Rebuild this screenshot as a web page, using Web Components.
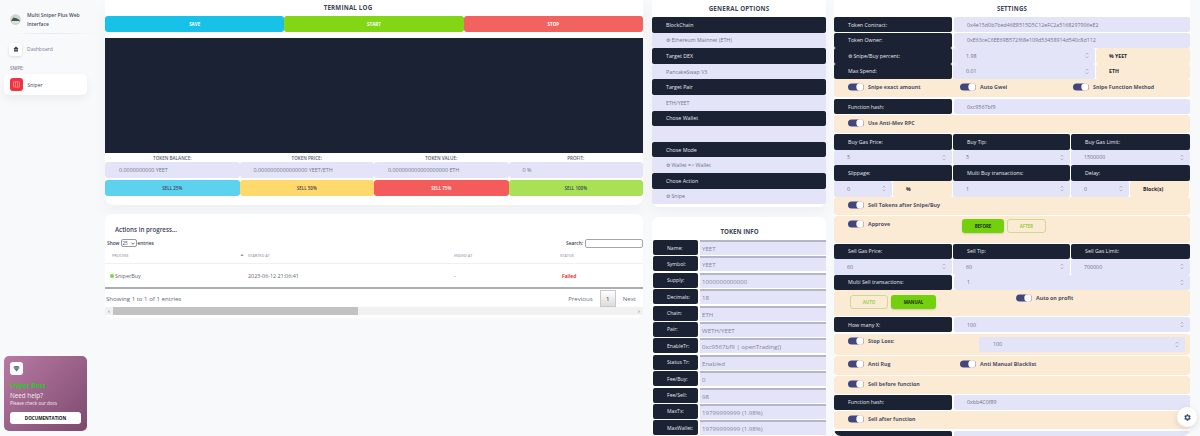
<!DOCTYPE html>
<html><head><meta charset="utf-8">
<style>
html,body{margin:0;padding:0;height:436px;overflow:hidden;background:#f8f9fa;font-family:"Open Sans","Liberation Sans",sans-serif;color:#67748e}
app-shell{display:flex;align-items:flex-start;width:1200px;height:436px;overflow:hidden}
</style></head><body>
<app-shell>
  <side-bar></side-bar>
  <div style="width:538px;flex:none;margin-left:0">
    <terminal-card></terminal-card>
    <actions-card></actions-card>
  </div>
  <div style="width:174px;flex:none;margin-left:9px">
    <general-card></general-card>
    <token-card></token-card>
  </div>
  <settings-card></settings-card>
</app-shell>
<gear-fab></gear-fab>
<script>
const def=(name,css,html)=>customElements.define(name,class extends HTMLElement{
  connectedCallback(){ if(this.shadowRoot) return;
    const r=this.attachShadow({mode:'open'});
    r.innerHTML='<style>'+css+'</style>'+(typeof html==='function'?html(this):html);
  }
});
const spin='<svg width="4" height="7" viewBox="0 0 4 7"><path d="M.7 2.5 2 1l1.3 1.5M.7 4.5 2 6l1.3-1.5" fill="none" stroke="#9a9cae" stroke-width=".6"/></svg>';
const toggle='<svg width="16" height="8" viewBox="0 0 16 8" style="flex:none;display:block"><rect width="16" height="7" y=".5" rx="3.5" fill="#41467e"/><circle cx="12" cy="4" r="3.7" fill="#fff"/></svg>';

/* ---------- small parts ---------- */
def('dark-cell',`:host{display:flex;align-items:center;box-sizing:border-box;background:#1a2233;color:#e6e8ee;font-size:5.3px;border-radius:2px;padding-left:var(--pl,14px);height:100%;white-space:nowrap}`,'<slot></slot>');
def('light-cell',`:host{display:flex;align-items:center;justify-content:space-between;box-sizing:border-box;background:#e4e4f8;color:#70748a;font-size:5.3px;border-radius:2px;padding:0 6px 0 var(--pl,13px);height:100%;white-space:nowrap}
 svg{display:block}`,t=>'<span><slot></slot></span>'+(t.hasAttribute('spin')?spin:''));
def('peach-cell',`:host{display:flex;align-items:center;box-sizing:border-box;background:#fbebd5;color:#1d2333;font-weight:700;font-size:5.2px;border-radius:2px;height:100%;padding-left:13px;white-space:nowrap}`,'<slot></slot>');
def('tog-gle',`:host{display:flex;align-items:center;gap:4px;color:#4b5168;font-size:5.3px;font-weight:700;white-space:nowrap}`,t=>toggle+'<span><slot></slot></span>');
def('opt-row',`:host{display:flex;box-sizing:border-box;background:#fbebd5;border-radius:3px;padding:0 0 2px 14px;margin-bottom:1px;position:relative}`,'<slot></slot>');
def('pill-btn',`:host{display:flex;align-items:center;justify-content:center;box-sizing:border-box;border-radius:3px;font-size:4.4px;font-weight:700;height:100%;white-space:nowrap}
 :host([kind=fill]){background:#73d00c;color:#1c2a10;box-shadow:0 1px 2px #0002}
 :host([kind=line]){border:1px solid #c9dd8c;color:#9ccb3a;background:transparent}`,'<slot></slot>');

/* ---------- sidebar ---------- */
def('side-bar',`:host{display:flex;flex-direction:column;box-sizing:border-box;flex:none;width:105px;height:436px;padding-top:10px}
 .brand{display:flex;align-items:center;gap:6px;padding:0 22px 0 10px;height:19px;color:#485068;font-size:5px;font-weight:600;line-height:9px}
 .logo{width:11px;height:11px;flex:none;border-radius:50%;display:block}
 .rule{height:1px;margin:4px 8px 0;background:linear-gradient(90deg,#0000,#e6e8ee,#0000)}
 .item{display:flex;align-items:center;gap:5px;margin:8px 0 0 9px;height:14px;font-size:5px;color:#7b809a}
 .tile{display:flex;align-items:center;justify-content:center;flex:none;width:13px;height:13px;border-radius:3px;background:#fff;box-shadow:0 1px 3px #0000001f}
 .head{font-size:4.4px;font-weight:600;color:#7b7f92;margin:9px 0 0 10px;line-height:6px}
 .active{display:flex;align-items:center;gap:5px;width:83px;height:21px;box-sizing:border-box;padding-left:6px;margin:3px 0 0 4px;background:#fff;border-radius:5px;box-shadow:0 4px 10px #0000000f;font-size:5px;color:#3d4459}
 .red{display:flex;align-items:center;justify-content:center;width:12.5px;height:12.5px;border-radius:3px;background:#ef3340}
 .help{box-sizing:border-box;width:83px;height:75px;margin:auto 0 5px 4px;padding:6px;border-radius:5px;background:linear-gradient(135deg,#b87aa4,#7d4a6e);color:#fff}
 .tile2{display:flex;align-items:center;justify-content:center;width:12.5px;height:12.5px;border-radius:3px;background:#fff}
 .g{color:#2ac928;font-weight:700;font-size:6.2px;line-height:8px;margin-top:7px}
 .n{font-size:6.3px;line-height:8px;margin-top:2px;color:#f6edf3}
 .p{font-size:4.6px;line-height:6px;margin-top:.4px;color:#f6edf3}
 .doc{display:flex;align-items:center;justify-content:center;height:12.5px;width:71px;margin-top:6px;background:#fff;border-radius:3px;color:#111;font-size:4.6px;font-weight:700}`,
 `<div class="brand"><svg class="logo" viewBox="0 0 11 11"><circle cx="5.5" cy="5.5" r="5.5" fill="#cfd6d0"/><path d="M1.5 6l2-2.5 3 .8 3 1.7v1.5h-8z" fill="#3f5a4e"/><rect x="2" y="7.2" width="7" height="1.2" fill="#f4f6f4"/></svg><span>Multi Sniper Plus Web Interface</span></div>
 <div class="rule"></div>
 <div class="item"><span class="tile"><svg width="6" height="6" viewBox="0 0 6 6"><path d="M3 .6 5.6 2.8H5v2.7H1V2.8H.4z" fill="#3a4154"/><rect x="1.2" y="3.6" width="3.6" height=".5" fill="#fff"/></svg></span>Dashboard</div>
 <div class="head">SNIPE:</div>
 <div class="active"><span class="red"><svg width="7" height="7" viewBox="0 0 7 7"><rect x=".6" y=".8" width="5.8" height="5.4" rx=".6" fill="none" stroke="#f9a4aa" stroke-width=".7"/><path d="M2.5 1v5M4.5 1v5" stroke="#f9a4aa" stroke-width=".6"/></svg></span>Sniper</div>
 <div class="help"><div class="tile2"><svg width="7" height="7" viewBox="0 0 7 7"><path d="M1.6 1h3.8L6.6 2.8 3.5 6.4.4 2.8z" fill="#5f7080"/><path d="M.8 3h5.4" stroke="#fff" stroke-width=".4"/></svg></div>
 <div class="g">Sniper Boss</div><div class="n">Need help?</div><div class="p">Please check our docs</div><div class="doc">DOCUMENTATION</div></div>`);

/* ---------- terminal ---------- */
def('terminal-card',`:host{display:block;box-sizing:border-box;background:#fff;height:205px;border-radius:0 0 8px 8px;box-shadow:0 8px 16px #0000000a}
 h3{margin:0;height:16px;padding-right:52px;text-align:center;font-size:6.2px;font-weight:700;line-height:15px;color:#3d4459;letter-spacing:.2px}
 .btns{display:grid;grid-template-columns:repeat(3,1fr);height:16px}
 .btns div,.sell div{display:flex;align-items:center;justify-content:center;font-size:4.5px;font-weight:700;border-radius:3px}
 .btns div{color:#fff}
 .term{height:115px;margin-top:6px;background:#1a2233}
 .lab{display:grid;grid-template-columns:repeat(4,1fr);height:9px;font-size:4.6px;font-weight:600;color:#555b70;text-align:center;line-height:10px}
 .val{display:grid;grid-template-columns:repeat(4,1fr);height:16px}
 .val div{display:flex;align-items:center;padding-left:14px;background:#e4e4f8;border-radius:3px;font-size:5.4px;color:#70748a;white-space:nowrap;overflow:hidden}
 .sell{display:grid;grid-template-columns:repeat(4,1fr);height:16px;margin-top:2px}
 .sell div{font-weight:600;color:#3a4154}`,
 `<h3>TERMINAL LOG</h3>
 <div class="btns"><div style="background:#17c1e8">SAVE</div><div style="background:#82d616">START</div><div style="background:#f2625f">STOP</div></div>
 <div class="term"></div>
 <div class="lab"><span>TOKEN BALANCE:</span><span>TOKEN PRICE:</span><span>TOKEN VALUE:</span><span>PROFIT:</span></div>
 <div class="val"><div>0.0000000000 YEET</div><div>0.0000000000000000 YEET/ETH</div><div>0.000000000000000000 ETH</div><div>0 %</div></div>
 <div class="sell"><div style="background:#5cd2ef">SELL 25%</div><div style="background:#ffd96b">SELL 50%</div><div style="background:#f45c5c;color:#fff">SELL 75%</div><div style="background:#a8e254">SELL 100%</div></div>`);

/* ---------- actions ---------- */
def('actions-card',`:host{display:block;box-sizing:border-box;background:#fff;height:104px;margin-top:9px;border-radius:7px;position:relative;color:#5f6478;font-size:6.1px}
 .t{padding:11px 0 0 10px;font-size:6.2px;font-weight:600;line-height:9px;color:#3d4459}
 .ctl{display:flex;justify-content:space-between;align-items:center;height:10px;margin-top:4px;padding:0 0 0 2px;font-size:4.8px;color:#3a4154;font-weight:600}
 .ctl span{display:flex;align-items:center;gap:1px}
 .sel{display:inline-flex;align-items:center;justify-content:space-around;box-sizing:border-box;width:16px;height:7.5px;border:1px solid #9a9aa5;border-radius:2px;font-size:4.6px;font-weight:400}
 .sr{box-sizing:border-box;display:inline-block;width:58px;height:9px;border:1px solid #a5a5ad;border-radius:2px;margin-left:1px}
 .grid{display:grid;grid-template-columns:138px 140px 123px 1fr}
 .h{height:15px;border-bottom:1px solid #eef0f4;font-size:3.8px;color:#9fa3b4;display:flex;align-items:center;font-weight:600;position:relative}
 .c{height:25px;display:flex;align-items:center;font-size:5.4px;border-bottom:2px solid #a9adb4;box-sizing:border-box}
 .info{display:flex;justify-content:space-between;height:18px;align-items:center;padding-left:1px;font-size:6.1px}
 .pg{display:flex;align-items:center;gap:7px;padding-right:7px;font-size:6.1px;color:#6a6f80}
 .one{display:flex;align-items:center;justify-content:center;width:16px;height:17px;border:1px solid #c9c9c9;background:linear-gradient(#fff,#dcdcdc);color:#333;box-sizing:border-box}
 .bar{display:flex;height:8px;background:#f1f1f1;align-items:center;position:relative}
 .th{position:absolute;left:8px;width:245px;height:8px;background:#c2c2c2}
 .ar{font-size:6px;line-height:8px;color:#505050;width:8px;text-align:center}`,
 `<div class="t">Actions in progress...</div>
 <div class="ctl"><span>Show <span class="sel">25 <svg width="4" height="3" viewBox="0 0 4 3"><path d="M.5.7 2 2.3 3.5.7" fill="none" stroke="#333" stroke-width=".7"/></svg></span> entries</span><span>Search: <span class="sr"></span></span></div>
 <div class="grid">
  <div class="h" style="padding-left:7px">PROCESS<span style="position:absolute;right:-1px;top:4px;font-size:4px;color:#7a7f95">▲</span></div><div class="h" style="padding-left:5px">STARTED AT</div><div class="h" style="padding-left:71px">ENDED AT</div><div class="h" style="padding-left:54px">STATUS</div>
  <div class="c" style="padding-left:5px;color:#5f6478"><svg width="4" height="4" viewBox="0 0 4 4" style="flex:none;margin-right:1px"><circle cx="2" cy="2" r="2" fill="#7ed24a"/></svg>SniperBuy</div>
  <div class="c" style="padding-left:5px">2023-06-12 21:06:41</div>
  <div class="c" style="padding-left:71px">-</div>
  <div class="c" style="padding-left:56px;color:#ea0606;font-weight:600;font-size:5px">Failed</div>
 </div>
 <div class="info"><span>Showing 1 to 1 of 1 entries</span><span class="pg"><span>Previous</span><span class="one">1</span><span>Next</span></span></div>
 <div class="bar"><span class="ar">‹</span><span class="th"></span><span class="ar" style="margin-left:auto">›</span></div>`);

/* ---------- general ---------- */
const gen=[['BlockChain','⚙ Ethereum Mainnet (ETH)'],['Target DEX','PancakeSwap V3'],['Target Pair','ETH/YEET'],['Chose Wallet',''],['Chose Mode','⚙ Wallet => Wallet'],['Chose Action','⚙ Snipe']];
def('general-card',`:host{display:block;box-sizing:border-box;background:#fff;height:207px;border-radius:0 0 7px 7px;box-shadow:0 6px 12px #0000000a;--pl:14px}
 h3{margin:0;height:17px;text-align:center;font-size:6.2px;font-weight:700;line-height:17px;color:#3d4459;letter-spacing:.2px}
 .r{height:15.6px}`,
 '<h3>GENERAL OPTIONS</h3>'+gen.map(g=>`<div class="r"><dark-cell>${g[0]}</dark-cell></div><div class="r"><light-cell>${g[1]}</light-cell></div>`).join(''));

/* ---------- token ---------- */
const tok=[['Name:','YEET'],['Symbol:','YEET'],['Supply:','1000000000000'],['Decimals:','18'],['Chain:','ETH'],['Pair:','WETH/YEET'],['EnableTr:','0xc9567bf9 | openTrading()'],['Status Tr:','Enabled'],['Fee/Buy:','0'],['Fee/Sell:','98'],['MaxTx:','19799999999 (1.98%)'],['MaxWallet:','19799999999 (1.98%)']];
def('token-card',`:host{display:block;box-sizing:border-box;background:#fff;height:219px;margin-top:10px;border-radius:7px;padding:10px 0 0 1px}
 h3{margin:0;height:13px;text-align:center;font-size:6.2px;font-weight:700;line-height:9px;color:#3d4459}
 .r{display:grid;grid-template-columns:45px 1fr;gap:2px;height:15px;margin-bottom:1.4px}
 dark-cell{--pl:14px;font-size:5.1px}
 .v{display:flex;align-items:center;padding-left:2px;background:#e4e4f8;border-top:2px solid #b4b5c9;box-sizing:border-box;font-size:6.1px;color:#80849a;white-space:nowrap}`,
 '<h3>TOKEN INFO</h3>'+tok.map(t=>`<div class="r"><dark-cell>${t[0]}</dark-cell><div class="v">${t[1]}</div></div>`).join(''));

/* ---------- settings ---------- */
def('settings-card',`:host{display:block;box-sizing:border-box;flex:none;width:356px;height:436px;margin-left:8px;background:#fff;border-radius:0 0 7px 7px;overflow:hidden}
 h3{margin:0;height:17px;text-align:center;font-size:6.1px;font-weight:700;line-height:17px;color:#3d4459;letter-spacing:.2px}
 .two{display:grid;grid-template-columns:118px 1fr;gap:2px;height:15px;margin-bottom:.5px}
 .two4{display:grid;grid-template-columns:118px 1fr 94px;gap:2px 1px;height:15.5px}
 .three{display:grid;grid-template-columns:118px 117px 1fr;gap:1px;height:15.5px}
 .six{display:grid;grid-template-columns:58px 59px 117px 58px 59px;gap:1px;height:16px}
 opt-row{align-items:center}
 .bt{display:flex;gap:3px;height:15px;align-items:center}`,
 `<h3>SETTINGS</h3>
 <div class="two"><dark-cell>Token Contract:</dark-cell><light-cell>0x4e15d0b7bed46E8515D5C12eFC2a5168297906eE2</light-cell></div>
 <div class="two"><dark-cell>Token Owner:</dark-cell><light-cell>0xE63ceC6EE69B572f68e109d53458914d540c8d112</light-cell></div>
 <div class="two4"><dark-cell>⚙ Snipe/Buy percent:</dark-cell><light-cell spin>1.98</light-cell><peach-cell>% YEET</peach-cell></div>
 <div class="two4"><dark-cell>Max Spend:</dark-cell><light-cell spin>0.01</light-cell><peach-cell>ETH</peach-cell></div>
 <opt-row style="height:18px;margin-bottom:2px"><tog-gle style="width:112px">Snipe exact amount</tog-gle><tog-gle style="width:113px">Auto Gwei</tog-gle><tog-gle>Snipe Function Method</tog-gle></opt-row>
 <div class="two" style="height:15px;margin-bottom:1px"><dark-cell>Function hash:</dark-cell><light-cell>0xc9567bf9</light-cell></div>
 <opt-row style="height:18px;margin-bottom:1px"><tog-gle>Use Anti-Mev RPC</tog-gle></opt-row>
 <div class="three"><dark-cell>Buy Gas Price:</dark-cell><dark-cell>Buy Tip:</dark-cell><dark-cell>Buy Gas Limit:</dark-cell></div>
 <div class="three"><light-cell spin>5</light-cell><light-cell spin>5</light-cell><light-cell spin>1500000</light-cell></div>
 <div class="three"><dark-cell>Slippage:</dark-cell><dark-cell>Multi Buy transactions:</dark-cell><dark-cell>Delay:</dark-cell></div>
 <div class="six"><light-cell spin>0</light-cell><peach-cell>%</peach-cell><light-cell spin>1</light-cell><light-cell spin>0</light-cell><peach-cell>Block(s)</peach-cell></div>
 <opt-row style="height:18px;margin-bottom:1px"><tog-gle>Sell Tokens after Snipe/Buy</tog-gle></opt-row>
 <opt-row style="height:27px;align-items:flex-start;padding-top:4px"><tog-gle style="width:114px">Approve</tog-gle><div class="bt" style="margin-top:-1px"><pill-btn kind="fill" style="width:42px;height:14px">BEFORE</pill-btn><pill-btn kind="line" style="width:39px;height:14px">AFTER</pill-btn></div></opt-row>
 <div class="three"><dark-cell>Sell Gas Price:</dark-cell><dark-cell>Sell Tip:</dark-cell><dark-cell>Sell Gas Limit:</dark-cell></div>
 <div class="three"><light-cell spin>60</light-cell><light-cell spin>60</light-cell><light-cell spin>700000</light-cell></div>
 <div class="two"><dark-cell>Multi Sell transactions:</dark-cell><light-cell spin>1</light-cell></div>
 <opt-row style="height:26px;align-items:flex-start;padding:4px 0 0 16px;margin-bottom:1px"><div class="bt" style="width:166px"><pill-btn kind="line" style="width:38px;height:14px">AUTO</pill-btn><pill-btn kind="fill" style="width:45px;height:14px">MANUAL</pill-btn></div><tog-gle style="margin-top:0">Auto on profit</tog-gle></opt-row>
 <div class="two" style="margin-bottom:1.5px"><dark-cell>How many X:</dark-cell><light-cell spin>100</light-cell></div>
 <opt-row style="height:21px;margin-bottom:1px;align-items:flex-start;padding-top:3px;padding-bottom:0"><tog-gle style="width:131px">Stop Loss:</tog-gle><light-cell spin style="flex:none;width:206px;height:15.5px;--pl:14px">100</light-cell></opt-row>
 <opt-row style="height:19px"><tog-gle style="width:112px">Anti Rug</tog-gle><tog-gle>Anti Manual Blacklist</tog-gle></opt-row>
 <opt-row style="height:18px"><tog-gle>Sell before function</tog-gle></opt-row>
 <div class="two" style="margin-bottom:1px"><dark-cell>Function hash:</dark-cell><light-cell>0xbb4C0f89</light-cell></div>
 <opt-row style="height:18px;margin-bottom:2px"><tog-gle>Sell after function</tog-gle></opt-row>
 <div class="two"><dark-cell>Function hash:</dark-cell><light-cell>0x4e15d0b7</light-cell></div>`);

def('gear-fab',`:host{position:fixed;left:1177px;top:407px;width:20px;height:20px;display:flex;align-items:center;justify-content:center;background:#fff;border-radius:50%;box-shadow:0 2px 6px #0000001f}`,
 `<svg width="9" height="9" viewBox="0 0 24 24"><path fill="#344767" d="M19.4 13a7.5 7.5 0 0 0 0-2l2.1-1.6-2-3.5-2.5 1a7.5 7.5 0 0 0-1.7-1L15 3.2h-4l-.4 2.7a7.5 7.5 0 0 0-1.7 1l-2.5-1-2 3.5L6.5 11a7.5 7.5 0 0 0 0 2l-2.1 1.6 2 3.5 2.5-1a7.5 7.5 0 0 0 1.7 1l.4 2.7h4l.4-2.7a7.5 7.5 0 0 0 1.7-1l2.5 1 2-3.5zM13 15.5a3.5 3.5 0 1 1 0-7 3.5 3.5 0 0 1 0 7z" transform="translate(-1 0)"/></svg>`);
</script>
</body></html>
